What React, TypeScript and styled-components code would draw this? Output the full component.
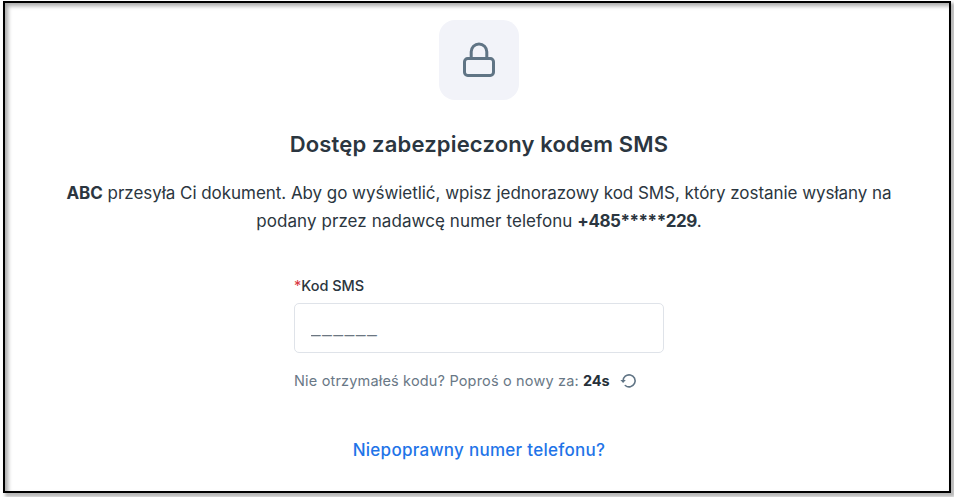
import React from "react";
import styled, { createGlobalStyle } from "styled-components";

const GlobalStyle = createGlobalStyle`
  *, *::before, *::after { box-sizing: border-box; }
  html { overflow: hidden; background: #fff; }
  body { margin: 0; min-height: 100vh; font-family: Inter, "Noto Sans", sans-serif; color: #2b3640; }
`;

const Page = styled.div`
  height: 497px;
  padding: 1px 0 0 3px;
`;

const Frame = styled.main`
  width: 948px;
  height: 492px;
  border: 2px solid #000;
  background: #fff;
  box-shadow: 3px 3px 3px 1px rgba(0, 0, 0, 0.28), inset 3px 3px 4px rgba(0, 0, 0, 0.34);
  display: flex;
  flex-direction: column;
  align-items: center;
  padding: 17px 0 0 4px;
`;

const IconTile = styled.div`
  width: 80px;
  height: 80px;
  border-radius: 16px;
  background: #f2f3f9;
  display: flex;
  justify-content: center;
  padding-top: 20px;
  flex: none;
`;

const Title = styled.h1`
  margin: 28px 0 0;
  font-size: 22px;
  line-height: 32px;
  font-weight: 600;
  letter-spacing: 0.17px;
  white-space: nowrap;
`;

const Description = styled.p`
  margin: 19px 0 0;
  font-size: 17px;
  line-height: 28px;
  text-align: center;
`;

const Line = styled.span<{ $spacing: number }>`
  display: block;
  white-space: nowrap;
  letter-spacing: ${(p) => p.$spacing}px;
`;

const Phone = styled.strong`
  letter-spacing: -0.45px;
`;

const Form = styled.form`
  width: 370px;
  margin-top: 41px;
  display: flex;
  flex-direction: column;
`;

const Label = styled.label`
  font-size: 14.5px;
  line-height: 20px;
  font-weight: 500;
  white-space: nowrap;
`;

const Required = styled.span`
  color: #d93843;
  font-weight: 400;
`;

const CodeInput = styled.input`
  height: 50px;
  margin-top: 7px;
  padding: 0 16px 1px;
  border: 1px solid #dfe3e9;
  border-radius: 5px;
  background: #fff;
  outline: none;
  color: #2b3640;
  font: 400 17px "Liberation Sans", sans-serif;
  letter-spacing: 1.8px;
  &::placeholder { color: #6b7681; opacity: 1; }
`;

const ResendRow = styled.div`
  margin-top: 18px;
  height: 20px;
  display: flex;
  align-items: center;
  font-size: 14.5px;
  line-height: 20px;
  letter-spacing: 0.17px;
  color: #697886;
  white-space: nowrap;
`;

const Countdown = styled.strong`
  margin: 0 10px 0 4px;
  letter-spacing: 0;
  color: #263139;
  font-weight: 700;
`;

const WrongNumber = styled.a`
  margin-top: 47px;
  font-size: 17px;
  line-height: 24px;
  font-weight: 500;
  letter-spacing: 0.28px;
  color: #1f74e8;
  text-decoration: none;
  white-space: nowrap;
`;

const LockIcon = () => (
  <svg width="34" height="38" viewBox="0 0 34 38" fill="none" stroke="#607485" strokeWidth="3">
    <rect x="2.5" y="18.5" width="29" height="17" rx="3.2" />
    <path d="M9.2 18.5v-6.7a7.8 7.8 0 0 1 15.6 0v6.7" />
  </svg>
);

const RefreshIcon = () => (
  <svg width="18" height="16" viewBox="0 0 18 16" fill="none">
    <path d="M3.1 8a6 6 0 1 1 2.2 4.5" stroke="#607485" strokeWidth="1.6" strokeLinecap="round" />
    <path d="M.4 7h5.4L3.1 10.1z" fill="#607485" />
  </svg>
);

export default function App() {
  return (
    <Page>
      <GlobalStyle />
      <Frame>
        <IconTile><LockIcon /></IconTile>
        <Title>Dostęp zabezpieczony kodem SMS</Title>
        <Description>
          <Line $spacing={-0.045}>
            <strong>ABC</strong> przesyła Ci dokument. Aby go wyświetlić, wpisz jednorazowy kod SMS, który zostanie wysłany na
          </Line>
          <Line $spacing={0.08}>
            podany przez nadawcę numer telefonu <Phone>+485*****229</Phone>.
          </Line>
        </Description>
        <Form>
          <Label htmlFor="sms-code"><Required>*</Required>Kod SMS</Label>
          <CodeInput id="sms-code" placeholder="______" inputMode="numeric" />
          <ResendRow>
            <span>Nie otrzymałeś kodu? Poproś o nowy za:</span>
            <Countdown>24s</Countdown>
            <RefreshIcon />
          </ResendRow>
        </Form>
        <WrongNumber href="#">Niepoprawny numer telefonu?</WrongNumber>
      </Frame>
    </Page>
  );
}
